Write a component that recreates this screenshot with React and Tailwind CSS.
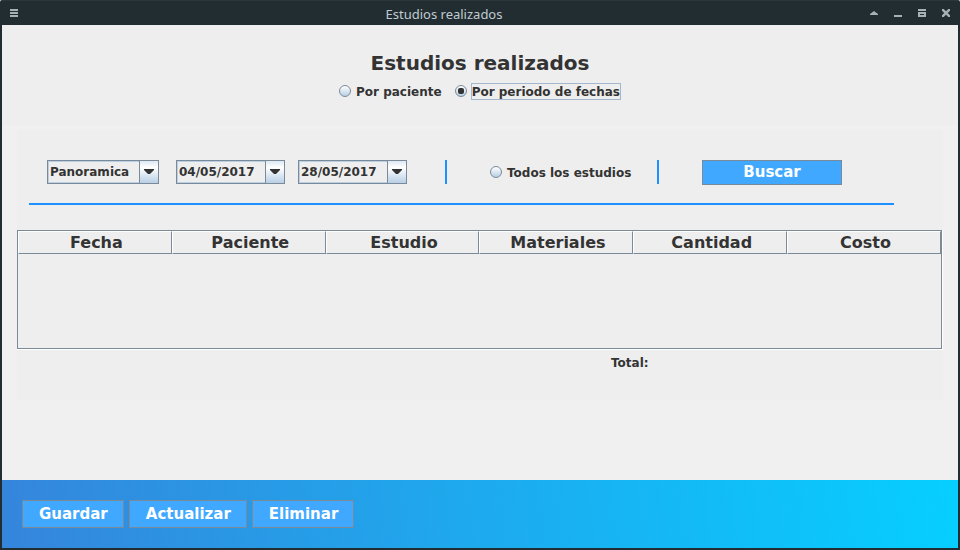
import { useState } from "react";

const columns = ["Fecha", "Paciente", "Estudio", "Materiales", "Cantidad", "Costo"];

function TitleBar() {
  return (
    <header className="grid h-[25px] grid-cols-[1fr_auto_1fr] items-center rounded-t-[2px] border-t border-[#2b373d] bg-[#222d32] px-[10px] text-[#a5b1b7]">
      <button type="button" aria-label="Menú" className="w-2">
        <svg width="8" height="8" viewBox="0 0 8 8" fill="currentColor" shapeRendering="crispEdges" className="block">
          <path d="M0 0h8v2H0zM0 3h8v2H0zM0 6h8v2H0z" />
        </svg>
      </button>
      <span className="pt-[2px] pr-[72px] font-['Noto_Sans',sans-serif] text-[13px] leading-[22px] text-[#c0cbd0]">Estudios realizados</span>
      <div className="flex justify-end gap-4">
        <button type="button" aria-label="Enrollar">
          <svg width="8" height="8" viewBox="0 0 8 8" fill="currentColor" className="block">
            <path d="M0 6V5L4 2l4 3v1z" />
          </svg>
        </button>
        <button type="button" aria-label="Minimizar">
          <svg width="8" height="8" viewBox="0 0 8 8" fill="currentColor" className="block">
            <path d="M0 6h8v2H0z" />
          </svg>
        </button>
        <button type="button" aria-label="Maximizar">
          <svg width="8" height="8" viewBox="0 0 8 8" fill="currentColor" fillRule="evenodd" className="block">
            <path d="M0 0h8v2H0zM0 3h8v5H0zM2 5v1h4V5z" />
          </svg>
        </button>
        <button type="button" aria-label="Cerrar">
          <svg width="8" height="8" viewBox="0 0 8 8" fill="none" stroke="currentColor" strokeWidth="2.4" className="block">
            <path d="M0 0l8 8M8 0l-8 8" />
          </svg>
        </button>
      </div>
    </header>
  );
}

function Radio({ label, focused, ...props }) {
  return (
    <label className="flex items-center gap-1">
      <input
        type="radio"
        className="mb-px grid size-3 appearance-none place-items-center rounded-full border border-[#7a8a99] bg-linear-to-b from-white to-[#b8cfe5] outline-none before:size-[6px] before:rounded-[2px] checked:before:bg-[#333333]"
        {...props}
      />
      <span className={`border pt-px leading-[14px] ${focused ? "border-[#a3b8cc]" : "border-transparent"}`}>{label}</span>
    </label>
  );
}

function Combo({ label, options, className }) {
  return (
    <div className={`relative h-6 border border-[#7a8a99] ${className}`}>
      <select
        aria-label={label}
        className="block h-full w-full appearance-none border border-[#b8cfe5] bg-[#eeeeee] pr-5 pl-px text-[12px] font-bold outline-none"
      >
        {options.map((option) => (
          <option key={option}>{option}</option>
        ))}
      </select>
      <span className="pointer-events-none absolute inset-y-0 right-0 grid w-[19px] place-items-center border-l border-[#7a8a99] bg-linear-to-b from-[#dde8f3] via-white via-30% to-[#b8cfe5]">
        <svg width="10" height="6" viewBox="0 0 10 6" fill="#333333">
          <path d="M0 0h10v1L6 5H4L0 1z" />
        </svg>
      </span>
    </div>
  );
}

function Button({ children, className }) {
  return (
    <button type="button" className={`border border-[#7a8a99] bg-[#40a9ff] text-[15px] font-bold text-white ${className}`}>
      {children}
    </button>
  );
}

export default function App() {
  const [mode, setMode] = useState("fechas");
  const [all, setAll] = useState(false);

  return (
    <div className="flex min-h-screen flex-col bg-white font-['DejaVu_Sans',sans-serif] text-[12px] text-[#333333]">
      <TitleBar />
      <div className="flex flex-1 flex-col border-x-2 border-b-2 border-[#222d32] bg-[#f0f0f0]">
        <section className="flex flex-col items-center bg-[#eeeeee] pt-6 pb-[25px] font-bold">
          <h1 className="text-[20px] leading-[28px]">Estudios realizados</h1>
          <div className="mt-[6px] flex gap-3">
            <Radio label="Por paciente" name="modo" checked={mode === "paciente"} onChange={() => setMode("paciente")} />
            <Radio label="Por periodo de fechas" name="modo" focused checked={mode === "fechas"} onChange={() => setMode("fechas")} />
          </div>
        </section>

        <main className="mx-[15px] mt-[5px] bg-[#eeeeee] pb-7 font-bold">
          <div className="mr-[49px] ml-3 flex items-start border-b-2 border-[#1e90ff] pt-[30px] pb-[18px] pl-[18px]">
            <Combo label="Tipo de estudio" options={["Panoramica"]} className="w-[112px]" />
            <Combo label="Fecha inicial" options={["04/05/2017"]} className="ml-[17px] w-[109px]" />
            <Combo label="Fecha final" options={["28/05/2017"]} className="ml-[13px] w-[109px]" />
            <div className="ml-[38px] flex h-6 w-[214px] items-center border-x-2 border-[#1e90ff] pl-[43px]">
              <Radio label="Todos los estudios" name="todos" checked={all} onChange={() => setAll(true)} />
            </div>
            <Button className="ml-[43px] h-[25px] w-[140px]">Buscar</Button>
          </div>

          <div className="mt-[25px] h-[120px] border-r border-b border-white">
            <div className="h-full border border-[#7a8a99]">
              <table className="w-full table-fixed border-separate border-spacing-0 text-[16px]">
                <thead>
                  <tr>
                    {columns.map((column) => (
                      <th key={column} scope="col" className="h-[23px] border border-t-white border-r-[#7a8a99] border-b-[#7a8a99] border-l-white p-0 pl-[3px] leading-[21px]">
                        {column}
                      </th>
                    ))}
                  </tr>
                </thead>
                <tbody />
              </table>
            </div>
          </div>
          <div className="flex pt-1">
            <span className="ml-[594px] leading-[18px]">Total:</span>
          </div>
        </main>

        <footer className="mt-auto flex gap-[5px] bg-linear-[82deg,#3585dc,#06cfff] px-5 py-5">
          <Button className="h-7 pr-[15px] pl-4">Guardar</Button>
          <Button className="h-7 pr-[15px] pl-4">Actualizar</Button>
          <Button className="h-7 pr-[15px] pl-4">Eliminar</Button>
        </footer>
      </div>
    </div>
  );
}
